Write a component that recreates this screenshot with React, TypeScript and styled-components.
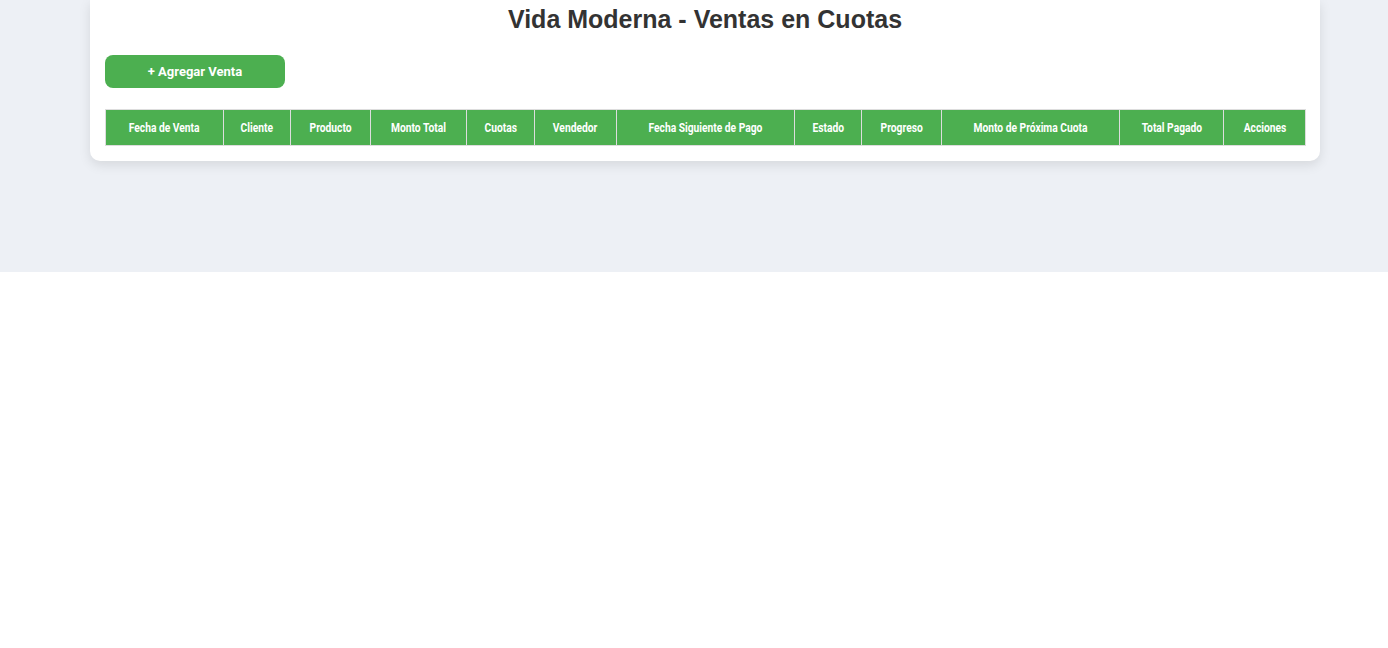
import React from "react";
import styled, { createGlobalStyle } from "styled-components";

const Global = createGlobalStyle`
  html, body { margin: 0; padding: 0; background: #ffffff; }
  body { font-family: "Liberation Sans", Arial, sans-serif; }
`;

const Page = styled.div`
  background: #edf0f5;
  height: 272px;
  padding: 0 68px 0 90px;
  box-sizing: border-box;
`;

const Card = styled.div`
  background: #ffffff;
  border-radius: 0 0 10px 10px;
  box-shadow: 0 4px 12px rgba(0, 0, 0, 0.1);
  padding: 0 15px 15px;
`;

const Title = styled.h1`
  margin: 0;
  text-align: center;
  font-family: "Liberation Sans", Arial, sans-serif;
  font-size: 25px;
  line-height: 38px;
  font-weight: 700;
  letter-spacing: 0;
  color: #333333;
`;

const AddButton = styled.button`
  display: block;
  margin-top: 17px;
  width: 180px;
  height: 33px;
  border: none;
  border-radius: 8px;
  background: #4caf50;
  color: #ffffff;
  font-family: Roboto, "Liberation Sans", sans-serif;
  font-weight: 700;
  font-size: 13px;
  cursor: pointer;
`;

const Table = styled.table`
  margin-top: 21px;
  width: 100%;
  border-collapse: collapse;
  table-layout: fixed;
`;

const Th = styled.th`
  background: #4caf50;
  color: #ffffff;
  border: 1px solid #dddddd;
  height: 36px;
  padding: 0;
  box-sizing: border-box;
  font-family: Roboto, "Liberation Sans", sans-serif;
  font-weight: 700;
  font-size: 12.5px;
  text-align: center;
  white-space: nowrap;
`;

const Condensed = styled.span`
  display: inline-block;
  transform: scaleX(0.82);
  transform-origin: center;
`;

const columns: [string, number][] = [
  ["Fecha de Venta", 118],
  ["Cliente", 67],
  ["Producto", 80],
  ["Monto Total", 96],
  ["Cuotas", 68],
  ["Vendedor", 82],
  ["Fecha Siguiente de Pago", 178],
  ["Estado", 67],
  ["Progreso", 80],
  ["Monto de Próxima Cuota", 178],
  ["Total Pagado", 104],
  ["Acciones", 82],
];

export default function App() {
  return (
    <>
      <Global />
      <Page>
        <Card>
          <Title>Vida Moderna - Ventas en Cuotas</Title>
          <AddButton>+ Agregar Venta</AddButton>
          <Table>
            <colgroup>
              {columns.map(([name, w]) => (
                <col key={name} style={{ width: w }} />
              ))}
            </colgroup>
            <thead>
              <tr>
                {columns.map(([name]) => (
                  <Th key={name}>
                    <Condensed>{name}</Condensed>
                  </Th>
                ))}
              </tr>
            </thead>
            <tbody />
          </Table>
        </Card>
      </Page>
    </>
  );
}
